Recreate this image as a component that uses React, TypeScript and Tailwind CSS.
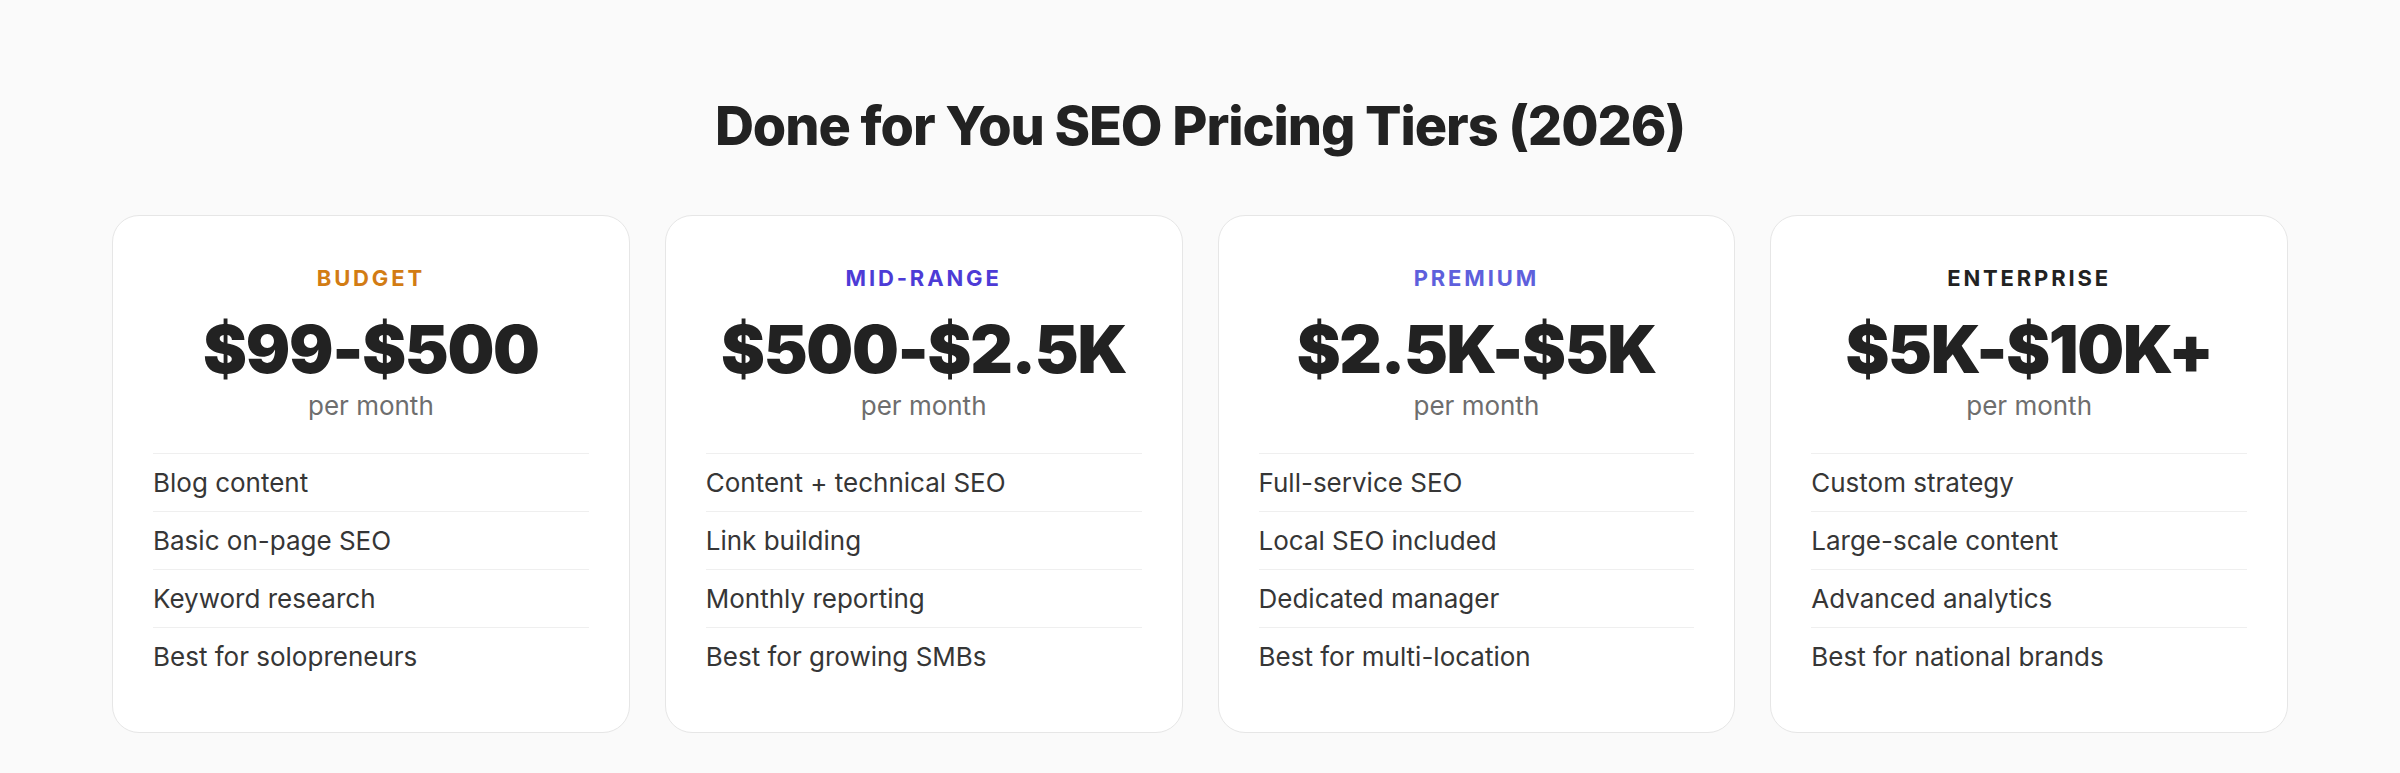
const tiers = [
  {
    label: "BUDGET",
    color: "text-[#d27c14]",
    price: "$99-$500",
    items: ["Blog content", "Basic on-page SEO", "Keyword research", "Best for solopreneurs"],
  },
  {
    label: "MID-RANGE",
    color: "text-[#4d3bd6]",
    price: "$500-$2.5K",
    items: ["Content + technical SEO", "Link building", "Monthly reporting", "Best for growing SMBs"],
  },
  {
    label: "PREMIUM",
    color: "text-[#5e60dc]",
    price: "$2.5K-$5K",
    items: ["Full-service SEO", "Local SEO included", "Dedicated manager", "Best for multi-location"],
  },
  {
    label: "ENTERPRISE",
    color: "text-[#222222]",
    price: "$5K-$10K+",
    items: ["Custom strategy", "Large-scale content", "Advanced analytics", "Best for national brands"],
  },
];

export default function App() {
  return (
    <div className="min-h-[773px] bg-[#fafafa] pt-[94px] font-['Inter',sans-serif] text-[#222222]">
      <h1 className="text-center text-[54px] leading-[1.2] font-extrabold tracking-[-0.02em]">
        Done for You SEO Pricing Tiers (2026)
      </h1>

      <div className="mt-[56px] grid grid-cols-4 gap-[35px] px-[112px]">
        {tiers.map((tier) => (
          <div
            key={tier.label}
            className="rounded-[27px] border border-[#e6e6e6] bg-white px-[40px] pt-[46px] pb-[47px]"
          >
            <div className="text-center">
              <p className={`text-[22px] leading-[1.5] font-bold tracking-[0.13em] ${tier.color}`}>
                {tier.label}
              </p>
              <p className="mt-[18px] text-[66px] leading-[1.1] font-black tracking-[-0.02em]">
                {tier.price}
              </p>
              <p className="mt-[1px] text-[26px] leading-[1.5] text-[#6e6e6e]">per month</p>
            </div>

            <ul className="mt-[28px]">
              {tier.items.map((item) => (
                <li
                  key={item}
                  className="border-t border-[#efefef] py-[10px] text-[26px] leading-[37px] text-[#363636]"
                >
                  {item}
                </li>
              ))}
            </ul>
          </div>
        ))}
      </div>
    </div>
  );
}
